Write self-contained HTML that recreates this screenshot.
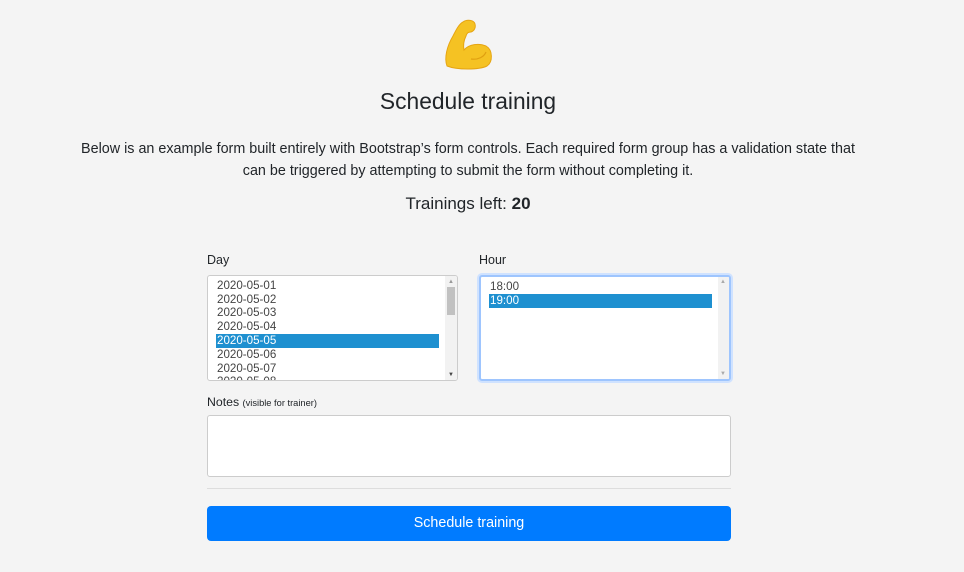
<!DOCTYPE html>
<html><head><style>
body{margin:0;width:964px;height:572px;background:#f4f4f4;font-family:"Liberation Sans",sans-serif;color:#212529;position:relative;overflow:hidden}
.a{position:absolute}
.box{position:absolute;background:#fff;border:1px solid #ccc;border-radius:3px;box-sizing:border-box}
.opt{position:absolute;left:8px;font-size:11.6px;line-height:13.8px;color:#444;width:222px;padding-left:1px}
.sel{background:#1e90d0;color:#fff}
</style></head><body>
<svg class="a" style="left:443px;top:18px" width="52" height="52" viewBox="0 0 52 52">
<path d="M4 48 C1 40 4 28 10 18 C13 12 16 6 20 4 C24 1 31 2 32 6 C33 10 31 13 28 14 C25 14 24 15 23 18 C21 22 20 27 21 32 C26 26 36 25 43 28 C50 32 50 44 44 48 C36 52 14 52 4 48 Z" fill="#f5c223" stroke="#e6a513" stroke-width="1"/>
<path d="M28 41 C35 42 41 39 43 34" fill="none" stroke="#e0a010" stroke-width="1.2"/>
</svg>
<div class="a" style="left:0;width:936px;top:88px;text-align:center;font-size:22.8px">Schedule training</div>
<div class="a" style="left:0;width:936px;top:138px;text-align:center;font-size:14.35px;line-height:22px">Below is an example form built entirely with Bootstrap’s form controls. Each required form group has a validation state that<br>can be triggered by attempting to submit the form without completing it.</div>
<div class="a" style="left:0;width:936px;top:194px;text-align:center;font-size:17px">Trainings left: <b>20</b></div>
<div class="a" style="left:207px;top:253px;font-size:12.5px">Day</div>
<div class="a" style="left:479px;top:253px;font-size:12.5px">Hour</div>
<div class="box" style="left:207px;top:275px;width:251px;height:106px;overflow:hidden">
<div class="opt" style="top:3px">2020-05-01</div>
<div class="opt" style="top:17px">2020-05-02</div>
<div class="opt" style="top:30px">2020-05-03</div>
<div class="opt" style="top:44px">2020-05-04</div>
<div class="opt sel" style="top:58px">2020-05-05</div>
<div class="opt" style="top:72px">2020-05-06</div>
<div class="opt" style="top:86px">2020-05-07</div>
<div class="opt" style="top:99px">2020-05-08</div>
<div class="a" style="right:0;top:0;width:12px;height:104px;background:#f2f2f2"></div>
<div class="a" style="right:2px;top:11px;width:8px;height:28px;background:#c1c1c1"></div>
<div class="a" style="right:3px;top:3px;font-size:6px;color:#999">▲</div>
<div class="a" style="right:3px;bottom:2px;font-size:6px;color:#444">▼</div>
</div>
<div class="box" style="left:479px;top:275px;width:252px;height:106px;border:2px solid #9ec5fe;box-shadow:0 0 0 2px #cfe2ff;overflow:hidden">
<div class="opt" style="top:3px;left:8px">18:00</div>
<div class="opt sel" style="top:17px;left:8px">19:00</div>
<div class="a" style="right:0;top:0;width:11px;height:102px;background:#f2f2f2"></div>
<div class="a" style="right:3px;top:2px;font-size:6px;color:#aaa">▲</div>
<div class="a" style="right:3px;bottom:2px;font-size:6px;color:#aaa">▼</div>
</div>
<div class="a" style="left:207px;top:395px;font-size:12.3px">Notes <span style="font-size:9.3px">(visible for trainer)</span></div>
<div class="box" style="left:207px;top:415px;width:524px;height:62px"></div>
<div class="a" style="left:207px;top:488px;width:524px;height:1px;background:#ddd"></div>
<div class="a" style="left:207px;top:506px;width:524px;height:35px;background:#007bff;border-radius:4px;color:#fff;font-size:14.3px;text-align:center;line-height:35px">Schedule training</div>
</body></html>
